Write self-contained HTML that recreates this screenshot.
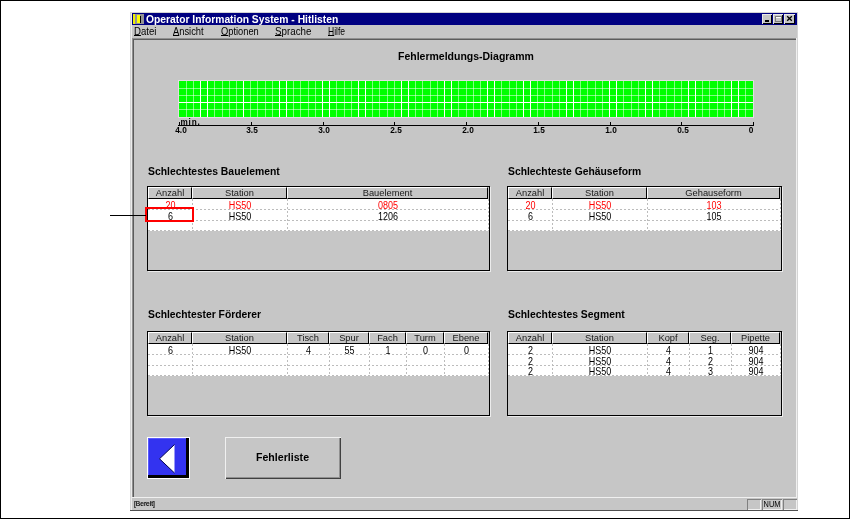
<!DOCTYPE html>
<html><head><meta charset="utf-8"><style>
html,body{margin:0;padding:0;}
body{width:850px;height:519px;position:relative;overflow:hidden;background:#fff;font-family:"Liberation Sans",sans-serif;}
u{text-decoration:underline;text-underline-offset:0px;text-decoration-thickness:1px;}
</style></head><body>
<div style="position:absolute;left:0;top:0;width:850px;height:519px;will-change:transform;">
<div style="position:absolute;left:0;top:0;width:850px;height:519px;box-sizing:border-box;border:1px solid #000;"></div>
<div style="position:absolute;left:130px;top:12px;width:668px;height:499px;background:#c6c6c6;"></div><div style="position:absolute;left:130px;top:12px;width:1px;height:499px;background:#d4d4d4;"></div><div style="position:absolute;left:131px;top:13px;width:1px;height:497px;background:#ececec;"></div><div style="position:absolute;left:130px;top:12px;width:668px;height:1px;background:#d4d4d4;"></div><div style="position:absolute;left:797px;top:12px;width:1px;height:499px;background:#d4d4d4;"></div><div style="position:absolute;left:130px;top:510px;width:668px;height:1px;background:#505050;"></div><div style="position:absolute;left:132px;top:13px;width:665px;height:12px;background:#000080;"></div><div style="position:absolute;left:133px;top:14px;width:2px;height:10px;background:#f0f000;"></div><div style="position:absolute;left:135px;top:14px;width:9px;height:10px;background:#949494;"></div><div style="position:absolute;left:137px;top:15px;width:3px;height:8px;background:#ffff00;"></div><div style="position:absolute;left:140px;top:16px;width:1px;height:7px;background:#000;"></div><div style="position:absolute;left:146.00px;top:11.99px;white-space:pre;font:bold 10.7px/14px 'Liberation Sans',sans-serif;color:#fff;letter-spacing:0px;transform:scaleX(0.9635);transform-origin:left top;">Operator Information System - Hitlisten</div><div style="position:absolute;left:762px;top:14px;width:10px;height:10px;background:#c6c6c6;box-shadow:inset 1px 1px 0 #e8e8e8, inset -1px -1px 0 #000;"><div style="position:absolute;left:3px;top:6px;width:4px;height:2px;background:#000"></div></div><div style="position:absolute;left:773px;top:14px;width:10px;height:10px;background:#c6c6c6;box-shadow:inset 1px 1px 0 #e8e8e8, inset -1px -1px 0 #000;"><div style="position:absolute;left:2px;top:2px;width:7px;height:6px;border:1px solid #7c7c7c;box-sizing:border-box"></div><div style="position:absolute;left:3px;top:3px;width:5px;height:1px;background:#fff"></div></div><div style="position:absolute;left:784px;top:14px;width:11px;height:10px;background:#c6c6c6;box-shadow:inset 1px 1px 0 #e8e8e8, inset -1px -1px 0 #000;"><svg width="11" height="10" style="position:absolute;left:0;top:0"><path d="M3.2 2.2 L7.8 6.8 M7.8 2.2 L3.2 6.8" stroke="#000" stroke-width="1.3"/></svg></div><div style="position:absolute;left:134.00px;top:23.86px;white-space:pre;font:normal 10.5px/14px 'Liberation Sans',sans-serif;color:#000;letter-spacing:0px;transform:scaleX(0.915);transform-origin:left top;"><u>D</u>atei</div><div style="position:absolute;left:173.00px;top:23.86px;white-space:pre;font:normal 10.5px/14px 'Liberation Sans',sans-serif;color:#000;letter-spacing:0px;transform:scaleX(0.89);transform-origin:left top;"><u>A</u>nsicht</div><div style="position:absolute;left:220.50px;top:23.86px;white-space:pre;font:normal 10.5px/14px 'Liberation Sans',sans-serif;color:#000;letter-spacing:0px;transform:scaleX(0.885);transform-origin:left top;"><u>O</u>ptionen</div><div style="position:absolute;left:275.00px;top:23.86px;white-space:pre;font:normal 10.5px/14px 'Liberation Sans',sans-serif;color:#000;letter-spacing:0px;transform:scaleX(0.93);transform-origin:left top;"><u>S</u>prache</div><div style="position:absolute;left:328.00px;top:23.86px;white-space:pre;font:normal 10.5px/14px 'Liberation Sans',sans-serif;color:#000;letter-spacing:0px;transform:scaleX(0.81);transform-origin:left top;"><u>H</u>ilfe</div><div style="position:absolute;left:132px;top:38px;width:2px;height:459px;background:#909090;"></div><div style="position:absolute;left:132px;top:38px;width:665px;height:2px;background:#909090;"></div><div style="position:absolute;left:133px;top:39px;width:1px;height:458px;background:#5c5c5c;"></div><div style="position:absolute;left:133px;top:39px;width:664px;height:1px;background:#5c5c5c;"></div><div style="position:absolute;left:132px;top:497px;width:665px;height:1px;background:#f0f0f0;"></div><div style="position:absolute;left:796px;top:38px;width:1px;height:460px;background:#f0f0f0;"></div><div style="position:absolute;left:134.00px;top:499.00px;white-space:pre;font:normal 7.5px/10px 'Liberation Sans',sans-serif;color:#000;letter-spacing:0px;transform:scaleX(0.88);transform-origin:left top;-webkit-text-stroke:0.2px #000;">[Bereit]</div><div style="position:absolute;left:747px;top:499px;width:14px;height:11px;box-shadow:inset 1px 1px 0 #808080, inset -1px -1px 0 #f0f0f0;box-sizing:border-box;"></div><div style="position:absolute;left:762px;top:499px;width:20px;height:11px;box-shadow:inset 1px 1px 0 #808080, inset -1px -1px 0 #f0f0f0;box-sizing:border-box;"></div><div style="position:absolute;left:783px;top:499px;width:14px;height:11px;box-shadow:inset 1px 1px 0 #808080, inset -1px -1px 0 #f0f0f0;box-sizing:border-box;"></div><div style="position:absolute;left:756.50px;top:499.42px;width:30px;text-align:center;white-space:pre;font:normal 8.6px/11px 'Liberation Sans',sans-serif;color:#000;letter-spacing:0px;transform:scaleX(0.86);transform-origin:center top;">NUM</div><div style="position:absolute;left:397.60px;top:48.79px;white-space:pre;font:bold 11px/14px 'Liberation Sans',sans-serif;color:#000;letter-spacing:0px;transform:scaleX(0.954);transform-origin:left top;">Fehlermeldungs-Diagramm</div><svg width="850" height="519" style="position:absolute;left:0;top:0"><rect x="178" y="80" width="576" height="38" fill="#e2dde2"/><rect x="179" y="81" width="574" height="36" fill="#00ff00"/><rect x="186" y="81" width="1" height="36" fill="#fff" fill-opacity="0.5"/><rect x="193" y="81" width="1" height="36" fill="#fff" fill-opacity="0.5"/><rect x="200" y="81" width="1" height="36" fill="#fff" fill-opacity="1.0"/><rect x="207" y="81" width="1" height="36" fill="#fff" fill-opacity="1.0"/><rect x="214" y="81" width="1" height="36" fill="#fff" fill-opacity="0.5"/><rect x="222" y="81" width="1" height="36" fill="#fff" fill-opacity="0.5"/><rect x="229" y="81" width="1" height="36" fill="#fff" fill-opacity="0.5"/><rect x="236" y="81" width="1" height="36" fill="#fff" fill-opacity="0.5"/><rect x="243" y="81" width="1" height="36" fill="#fff" fill-opacity="1.0"/><rect x="250" y="81" width="1" height="36" fill="#fff" fill-opacity="0.5"/><rect x="257" y="81" width="1" height="36" fill="#fff" fill-opacity="0.5"/><rect x="265" y="81" width="1" height="36" fill="#fff" fill-opacity="0.5"/><rect x="272" y="81" width="1" height="36" fill="#fff" fill-opacity="0.5"/><rect x="279" y="81" width="1" height="36" fill="#fff" fill-opacity="1.0"/><rect x="286" y="81" width="1" height="36" fill="#fff" fill-opacity="1.0"/><rect x="293" y="81" width="1" height="36" fill="#fff" fill-opacity="0.5"/><rect x="300" y="81" width="1" height="36" fill="#fff" fill-opacity="0.5"/><rect x="308" y="81" width="1" height="36" fill="#fff" fill-opacity="0.5"/><rect x="315" y="81" width="1" height="36" fill="#fff" fill-opacity="0.5"/><rect x="322" y="81" width="1" height="36" fill="#fff" fill-opacity="1.0"/><rect x="329" y="81" width="1" height="36" fill="#fff" fill-opacity="1.0"/><rect x="336" y="81" width="1" height="36" fill="#fff" fill-opacity="0.5"/><rect x="344" y="81" width="1" height="36" fill="#fff" fill-opacity="0.5"/><rect x="351" y="81" width="1" height="36" fill="#fff" fill-opacity="0.5"/><rect x="358" y="81" width="1" height="36" fill="#fff" fill-opacity="1.0"/><rect x="365" y="81" width="1" height="36" fill="#fff" fill-opacity="1.0"/><rect x="372" y="81" width="1" height="36" fill="#fff" fill-opacity="0.5"/><rect x="379" y="81" width="1" height="36" fill="#fff" fill-opacity="0.5"/><rect x="387" y="81" width="1" height="36" fill="#fff" fill-opacity="0.5"/><rect x="394" y="81" width="1" height="36" fill="#fff" fill-opacity="0.5"/><rect x="401" y="81" width="1" height="36" fill="#fff" fill-opacity="1.0"/><rect x="408" y="81" width="1" height="36" fill="#fff" fill-opacity="1.0"/><rect x="415" y="81" width="1" height="36" fill="#fff" fill-opacity="0.5"/><rect x="422" y="81" width="1" height="36" fill="#fff" fill-opacity="0.5"/><rect x="430" y="81" width="1" height="36" fill="#fff" fill-opacity="0.5"/><rect x="437" y="81" width="1" height="36" fill="#fff" fill-opacity="0.5"/><rect x="444" y="81" width="1" height="36" fill="#fff" fill-opacity="1.0"/><rect x="451" y="81" width="1" height="36" fill="#fff" fill-opacity="1.0"/><rect x="458" y="81" width="1" height="36" fill="#fff" fill-opacity="0.5"/><rect x="466" y="81" width="1" height="36" fill="#fff" fill-opacity="0.5"/><rect x="473" y="81" width="1" height="36" fill="#fff" fill-opacity="0.5"/><rect x="480" y="81" width="1" height="36" fill="#fff" fill-opacity="0.5"/><rect x="487" y="81" width="1" height="36" fill="#fff" fill-opacity="1.0"/><rect x="494" y="81" width="1" height="36" fill="#fff" fill-opacity="1.0"/><rect x="501" y="81" width="1" height="36" fill="#fff" fill-opacity="0.5"/><rect x="509" y="81" width="1" height="36" fill="#fff" fill-opacity="0.5"/><rect x="516" y="81" width="1" height="36" fill="#fff" fill-opacity="0.5"/><rect x="523" y="81" width="1" height="36" fill="#fff" fill-opacity="1.0"/><rect x="530" y="81" width="1" height="36" fill="#fff" fill-opacity="1.0"/><rect x="537" y="81" width="1" height="36" fill="#fff" fill-opacity="0.5"/><rect x="544" y="81" width="1" height="36" fill="#fff" fill-opacity="0.5"/><rect x="552" y="81" width="1" height="36" fill="#fff" fill-opacity="0.5"/><rect x="559" y="81" width="1" height="36" fill="#fff" fill-opacity="0.5"/><rect x="566" y="81" width="1" height="36" fill="#fff" fill-opacity="1.0"/><rect x="573" y="81" width="1" height="36" fill="#fff" fill-opacity="1.0"/><rect x="580" y="81" width="1" height="36" fill="#fff" fill-opacity="0.5"/><rect x="587" y="81" width="1" height="36" fill="#fff" fill-opacity="0.5"/><rect x="595" y="81" width="1" height="36" fill="#fff" fill-opacity="0.5"/><rect x="602" y="81" width="1" height="36" fill="#fff" fill-opacity="0.5"/><rect x="609" y="81" width="1" height="36" fill="#fff" fill-opacity="1.0"/><rect x="616" y="81" width="1" height="36" fill="#fff" fill-opacity="1.0"/><rect x="623" y="81" width="1" height="36" fill="#fff" fill-opacity="0.5"/><rect x="631" y="81" width="1" height="36" fill="#fff" fill-opacity="0.5"/><rect x="638" y="81" width="1" height="36" fill="#fff" fill-opacity="0.5"/><rect x="645" y="81" width="1" height="36" fill="#fff" fill-opacity="1.0"/><rect x="652" y="81" width="1" height="36" fill="#fff" fill-opacity="1.0"/><rect x="659" y="81" width="1" height="36" fill="#fff" fill-opacity="0.5"/><rect x="666" y="81" width="1" height="36" fill="#fff" fill-opacity="0.5"/><rect x="674" y="81" width="1" height="36" fill="#fff" fill-opacity="0.5"/><rect x="681" y="81" width="1" height="36" fill="#fff" fill-opacity="0.5"/><rect x="688" y="81" width="1" height="36" fill="#fff" fill-opacity="1.0"/><rect x="695" y="81" width="1" height="36" fill="#fff" fill-opacity="1.0"/><rect x="702" y="81" width="1" height="36" fill="#fff" fill-opacity="0.5"/><rect x="709" y="81" width="1" height="36" fill="#fff" fill-opacity="0.5"/><rect x="717" y="81" width="1" height="36" fill="#fff" fill-opacity="0.5"/><rect x="724" y="81" width="1" height="36" fill="#fff" fill-opacity="0.5"/><rect x="731" y="81" width="1" height="36" fill="#fff" fill-opacity="1.0"/><rect x="738" y="81" width="1" height="36" fill="#fff" fill-opacity="1.0"/><rect x="745" y="81" width="1" height="36" fill="#fff" fill-opacity="0.5"/><rect x="179" y="88" width="574" height="1" fill="#fff" fill-opacity="0.5"/><rect x="179" y="95" width="574" height="1" fill="#fff" fill-opacity="0.5"/><rect x="179" y="102" width="574" height="1" fill="#fff" fill-opacity="1.0"/><rect x="179" y="109" width="574" height="1" fill="#fff" fill-opacity="0.5"/><rect x="178" y="125" width="576" height="1" fill="#000"/><rect x="753" y="122" width="1" height="3" fill="#000"/><rect x="681" y="122" width="1" height="3" fill="#000"/><rect x="610" y="122" width="1" height="3" fill="#000"/><rect x="538" y="122" width="1" height="3" fill="#000"/><rect x="466" y="122" width="1" height="3" fill="#000"/><rect x="394" y="122" width="1" height="3" fill="#000"/><rect x="323" y="122" width="1" height="3" fill="#000"/><rect x="251" y="122" width="1" height="3" fill="#000"/><rect x="179" y="122" width="1" height="3" fill="#000"/></svg><div style="position:absolute;left:165.70px;top:124.21px;width:30px;text-align:center;white-space:pre;font:bold 9.2px/12px 'Liberation Sans',sans-serif;color:#000;letter-spacing:0px;transform:scaleX(0.9);transform-origin:center top;">4.0</div><div style="position:absolute;left:237.40px;top:124.21px;width:30px;text-align:center;white-space:pre;font:bold 9.2px/12px 'Liberation Sans',sans-serif;color:#000;letter-spacing:0px;transform:scaleX(0.9);transform-origin:center top;">3.5</div><div style="position:absolute;left:309.10px;top:124.21px;width:30px;text-align:center;white-space:pre;font:bold 9.2px/12px 'Liberation Sans',sans-serif;color:#000;letter-spacing:0px;transform:scaleX(0.9);transform-origin:center top;">3.0</div><div style="position:absolute;left:380.80px;top:124.21px;width:30px;text-align:center;white-space:pre;font:bold 9.2px/12px 'Liberation Sans',sans-serif;color:#000;letter-spacing:0px;transform:scaleX(0.9);transform-origin:center top;">2.5</div><div style="position:absolute;left:452.50px;top:124.21px;width:30px;text-align:center;white-space:pre;font:bold 9.2px/12px 'Liberation Sans',sans-serif;color:#000;letter-spacing:0px;transform:scaleX(0.9);transform-origin:center top;">2.0</div><div style="position:absolute;left:524.20px;top:124.21px;width:30px;text-align:center;white-space:pre;font:bold 9.2px/12px 'Liberation Sans',sans-serif;color:#000;letter-spacing:0px;transform:scaleX(0.9);transform-origin:center top;">1.5</div><div style="position:absolute;left:595.90px;top:124.21px;width:30px;text-align:center;white-space:pre;font:bold 9.2px/12px 'Liberation Sans',sans-serif;color:#000;letter-spacing:0px;transform:scaleX(0.9);transform-origin:center top;">1.0</div><div style="position:absolute;left:667.60px;top:124.21px;width:30px;text-align:center;white-space:pre;font:bold 9.2px/12px 'Liberation Sans',sans-serif;color:#000;letter-spacing:0px;transform:scaleX(0.9);transform-origin:center top;">0.5</div><div style="position:absolute;left:736.00px;top:124.21px;width:30px;text-align:center;white-space:pre;font:bold 9.2px/12px 'Liberation Sans',sans-serif;color:#000;letter-spacing:0px;transform:scaleX(0.9);transform-origin:center top;">0</div><div style="position:absolute;left:180.50px;top:117.46px;white-space:pre;font:normal 8.2px/11px 'Liberation Sans',sans-serif;color:#000;letter-spacing:0.8px;font-weight:600;">min.</div><div style="position:absolute;left:147.90px;top:164.19px;white-space:pre;font:bold 11px/14px 'Liberation Sans',sans-serif;color:#000;letter-spacing:0px;transform:scaleX(0.9455484611521632);transform-origin:left top;">Schlechtestes Bauelement</div><div style="position:absolute;left:507.90px;top:164.19px;white-space:pre;font:bold 11px/14px 'Liberation Sans',sans-serif;color:#000;letter-spacing:0px;transform:scaleX(0.9397913141567964);transform-origin:left top;">Schlechteste Gehäuseform</div><div style="position:absolute;left:147.90px;top:306.99px;white-space:pre;font:bold 11px/14px 'Liberation Sans',sans-serif;color:#000;letter-spacing:0px;transform:scaleX(0.9390567917635336);transform-origin:left top;">Schlechtester Förderer</div><div style="position:absolute;left:507.90px;top:306.99px;white-space:pre;font:bold 11px/14px 'Liberation Sans',sans-serif;color:#000;letter-spacing:0px;transform:scaleX(0.945748987854251);transform-origin:left top;">Schlechtestes Segment</div><div style="position:absolute;left:147px;top:186px;width:343px;height:85px;box-sizing:border-box;border:1px solid #000;box-shadow:1px 1px 0 #ececec;"></div><div style="position:absolute;left:148px;top:199px;width:341px;height:31px;background:#fff;"></div><div style="position:absolute;left:148px;top:187px;width:44px;height:12px;box-sizing:border-box;background:#c6c6c6;border-top:1px solid #fff;border-left:1px solid #fff;border-right:1px solid #000;border-bottom:1px solid #000;"></div><div style="position:absolute;left:192px;top:187px;width:95px;height:12px;box-sizing:border-box;background:#c6c6c6;border-top:1px solid #fff;border-left:1px solid #fff;border-right:1px solid #000;border-bottom:1px solid #000;"></div><div style="position:absolute;left:287px;top:187px;width:201px;height:12px;box-sizing:border-box;background:#c6c6c6;border-top:1px solid #fff;border-left:1px solid #fff;border-right:1px solid #000;border-bottom:1px solid #000;"></div><div style="position:absolute;left:148px;top:209px;width:341px;height:1px;background:repeating-linear-gradient(90deg,#bcbcbc 0 2px,#fff 2px 4px);"></div><div style="position:absolute;left:148px;top:220px;width:341px;height:1px;background:repeating-linear-gradient(90deg,#bcbcbc 0 2px,#fff 2px 4px);"></div><div style="position:absolute;left:148px;top:230px;width:341px;height:1px;background:repeating-linear-gradient(90deg,#bcbcbc 0 2px,#fff 2px 4px);"></div><div style="position:absolute;left:192px;top:199px;width:1px;height:31px;background:repeating-linear-gradient(180deg,#bcbcbc 0 2px,#fff 2px 4px);"></div><div style="position:absolute;left:287px;top:199px;width:1px;height:31px;background:repeating-linear-gradient(180deg,#bcbcbc 0 2px,#fff 2px 4px);"></div><div style="position:absolute;left:488px;top:199px;width:1px;height:31px;background:repeating-linear-gradient(180deg,#bcbcbc 0 2px,#fff 2px 4px);"></div><div style="position:absolute;left:138.50px;top:186.68px;width:63px;text-align:center;white-space:pre;font:normal 9.3px/12px 'Liberation Sans',sans-serif;color:#181818;letter-spacing:0px;">Anzahl</div><div style="position:absolute;left:182.50px;top:186.68px;width:114px;text-align:center;white-space:pre;font:normal 9.3px/12px 'Liberation Sans',sans-serif;color:#181818;letter-spacing:0px;">Station</div><div style="position:absolute;left:277.50px;top:186.68px;width:220px;text-align:center;white-space:pre;font:normal 9.3px/12px 'Liberation Sans',sans-serif;color:#181818;letter-spacing:0px;">Bauelement</div><div style="position:absolute;left:138.50px;top:198.63px;width:63px;text-align:center;white-space:pre;font:normal 10px/13px 'Liberation Sans',sans-serif;color:#ff0000;letter-spacing:0px;transform:scaleX(0.9);transform-origin:center top;">20</div><div style="position:absolute;left:182.50px;top:198.63px;width:114px;text-align:center;white-space:pre;font:normal 10px/13px 'Liberation Sans',sans-serif;color:#ff0000;letter-spacing:0px;transform:scaleX(0.9);transform-origin:center top;">HS50</div><div style="position:absolute;left:277.50px;top:198.63px;width:220px;text-align:center;white-space:pre;font:normal 10px/13px 'Liberation Sans',sans-serif;color:#ff0000;letter-spacing:0px;transform:scaleX(0.9);transform-origin:center top;">0805</div><div style="position:absolute;left:138.50px;top:209.70px;width:63px;text-align:center;white-space:pre;font:normal 10.1px/13px 'Liberation Sans',sans-serif;color:#000;letter-spacing:0px;transform:scaleX(0.89);transform-origin:center top;">6</div><div style="position:absolute;left:182.50px;top:209.70px;width:114px;text-align:center;white-space:pre;font:normal 10.1px/13px 'Liberation Sans',sans-serif;color:#000;letter-spacing:0px;transform:scaleX(0.89);transform-origin:center top;">HS50</div><div style="position:absolute;left:277.50px;top:209.70px;width:220px;text-align:center;white-space:pre;font:normal 10.1px/13px 'Liberation Sans',sans-serif;color:#000;letter-spacing:0px;transform:scaleX(0.89);transform-origin:center top;">1206</div><div style="position:absolute;left:507px;top:186px;width:275px;height:85px;box-sizing:border-box;border:1px solid #000;box-shadow:1px 1px 0 #ececec;"></div><div style="position:absolute;left:508px;top:199px;width:273px;height:31px;background:#fff;"></div><div style="position:absolute;left:508px;top:187px;width:44px;height:12px;box-sizing:border-box;background:#c6c6c6;border-top:1px solid #fff;border-left:1px solid #fff;border-right:1px solid #000;border-bottom:1px solid #000;"></div><div style="position:absolute;left:552px;top:187px;width:95px;height:12px;box-sizing:border-box;background:#c6c6c6;border-top:1px solid #fff;border-left:1px solid #fff;border-right:1px solid #000;border-bottom:1px solid #000;"></div><div style="position:absolute;left:647px;top:187px;width:133px;height:12px;box-sizing:border-box;background:#c6c6c6;border-top:1px solid #fff;border-left:1px solid #fff;border-right:1px solid #000;border-bottom:1px solid #000;"></div><div style="position:absolute;left:508px;top:209px;width:273px;height:1px;background:repeating-linear-gradient(90deg,#bcbcbc 0 2px,#fff 2px 4px);"></div><div style="position:absolute;left:508px;top:220px;width:273px;height:1px;background:repeating-linear-gradient(90deg,#bcbcbc 0 2px,#fff 2px 4px);"></div><div style="position:absolute;left:508px;top:230px;width:273px;height:1px;background:repeating-linear-gradient(90deg,#bcbcbc 0 2px,#fff 2px 4px);"></div><div style="position:absolute;left:552px;top:199px;width:1px;height:31px;background:repeating-linear-gradient(180deg,#bcbcbc 0 2px,#fff 2px 4px);"></div><div style="position:absolute;left:647px;top:199px;width:1px;height:31px;background:repeating-linear-gradient(180deg,#bcbcbc 0 2px,#fff 2px 4px);"></div><div style="position:absolute;left:780px;top:199px;width:1px;height:31px;background:repeating-linear-gradient(180deg,#bcbcbc 0 2px,#fff 2px 4px);"></div><div style="position:absolute;left:498.50px;top:186.68px;width:63px;text-align:center;white-space:pre;font:normal 9.3px/12px 'Liberation Sans',sans-serif;color:#181818;letter-spacing:0px;">Anzahl</div><div style="position:absolute;left:542.50px;top:186.68px;width:114px;text-align:center;white-space:pre;font:normal 9.3px/12px 'Liberation Sans',sans-serif;color:#181818;letter-spacing:0px;">Station</div><div style="position:absolute;left:637.50px;top:186.68px;width:152px;text-align:center;white-space:pre;font:normal 9.3px/12px 'Liberation Sans',sans-serif;color:#181818;letter-spacing:0px;">Gehauseform</div><div style="position:absolute;left:498.50px;top:198.63px;width:63px;text-align:center;white-space:pre;font:normal 10px/13px 'Liberation Sans',sans-serif;color:#ff0000;letter-spacing:0px;transform:scaleX(0.9);transform-origin:center top;">20</div><div style="position:absolute;left:542.50px;top:198.63px;width:114px;text-align:center;white-space:pre;font:normal 10px/13px 'Liberation Sans',sans-serif;color:#ff0000;letter-spacing:0px;transform:scaleX(0.9);transform-origin:center top;">HS50</div><div style="position:absolute;left:637.50px;top:198.63px;width:152px;text-align:center;white-space:pre;font:normal 10px/13px 'Liberation Sans',sans-serif;color:#ff0000;letter-spacing:0px;transform:scaleX(0.9);transform-origin:center top;">103</div><div style="position:absolute;left:498.50px;top:209.70px;width:63px;text-align:center;white-space:pre;font:normal 10.1px/13px 'Liberation Sans',sans-serif;color:#000;letter-spacing:0px;transform:scaleX(0.89);transform-origin:center top;">6</div><div style="position:absolute;left:542.50px;top:209.70px;width:114px;text-align:center;white-space:pre;font:normal 10.1px/13px 'Liberation Sans',sans-serif;color:#000;letter-spacing:0px;transform:scaleX(0.89);transform-origin:center top;">HS50</div><div style="position:absolute;left:637.50px;top:209.70px;width:152px;text-align:center;white-space:pre;font:normal 10.1px/13px 'Liberation Sans',sans-serif;color:#000;letter-spacing:0px;transform:scaleX(0.89);transform-origin:center top;">105</div><div style="position:absolute;left:147px;top:331px;width:343px;height:85px;box-sizing:border-box;border:1px solid #000;box-shadow:1px 1px 0 #ececec;"></div><div style="position:absolute;left:148px;top:344px;width:341px;height:31px;background:#fff;"></div><div style="position:absolute;left:148px;top:332px;width:44px;height:12px;box-sizing:border-box;background:#c6c6c6;border-top:1px solid #fff;border-left:1px solid #fff;border-right:1px solid #000;border-bottom:1px solid #000;"></div><div style="position:absolute;left:192px;top:332px;width:95px;height:12px;box-sizing:border-box;background:#c6c6c6;border-top:1px solid #fff;border-left:1px solid #fff;border-right:1px solid #000;border-bottom:1px solid #000;"></div><div style="position:absolute;left:287px;top:332px;width:42px;height:12px;box-sizing:border-box;background:#c6c6c6;border-top:1px solid #fff;border-left:1px solid #fff;border-right:1px solid #000;border-bottom:1px solid #000;"></div><div style="position:absolute;left:329px;top:332px;width:40px;height:12px;box-sizing:border-box;background:#c6c6c6;border-top:1px solid #fff;border-left:1px solid #fff;border-right:1px solid #000;border-bottom:1px solid #000;"></div><div style="position:absolute;left:369px;top:332px;width:37px;height:12px;box-sizing:border-box;background:#c6c6c6;border-top:1px solid #fff;border-left:1px solid #fff;border-right:1px solid #000;border-bottom:1px solid #000;"></div><div style="position:absolute;left:406px;top:332px;width:38px;height:12px;box-sizing:border-box;background:#c6c6c6;border-top:1px solid #fff;border-left:1px solid #fff;border-right:1px solid #000;border-bottom:1px solid #000;"></div><div style="position:absolute;left:444px;top:332px;width:44px;height:12px;box-sizing:border-box;background:#c6c6c6;border-top:1px solid #fff;border-left:1px solid #fff;border-right:1px solid #000;border-bottom:1px solid #000;"></div><div style="position:absolute;left:148px;top:354px;width:341px;height:1px;background:repeating-linear-gradient(90deg,#bcbcbc 0 2px,#fff 2px 4px);"></div><div style="position:absolute;left:148px;top:365px;width:341px;height:1px;background:repeating-linear-gradient(90deg,#bcbcbc 0 2px,#fff 2px 4px);"></div><div style="position:absolute;left:148px;top:375px;width:341px;height:1px;background:repeating-linear-gradient(90deg,#bcbcbc 0 2px,#fff 2px 4px);"></div><div style="position:absolute;left:192px;top:344px;width:1px;height:31px;background:repeating-linear-gradient(180deg,#bcbcbc 0 2px,#fff 2px 4px);"></div><div style="position:absolute;left:287px;top:344px;width:1px;height:31px;background:repeating-linear-gradient(180deg,#bcbcbc 0 2px,#fff 2px 4px);"></div><div style="position:absolute;left:329px;top:344px;width:1px;height:31px;background:repeating-linear-gradient(180deg,#bcbcbc 0 2px,#fff 2px 4px);"></div><div style="position:absolute;left:369px;top:344px;width:1px;height:31px;background:repeating-linear-gradient(180deg,#bcbcbc 0 2px,#fff 2px 4px);"></div><div style="position:absolute;left:406px;top:344px;width:1px;height:31px;background:repeating-linear-gradient(180deg,#bcbcbc 0 2px,#fff 2px 4px);"></div><div style="position:absolute;left:444px;top:344px;width:1px;height:31px;background:repeating-linear-gradient(180deg,#bcbcbc 0 2px,#fff 2px 4px);"></div><div style="position:absolute;left:488px;top:344px;width:1px;height:31px;background:repeating-linear-gradient(180deg,#bcbcbc 0 2px,#fff 2px 4px);"></div><div style="position:absolute;left:138.50px;top:331.68px;width:63px;text-align:center;white-space:pre;font:normal 9.3px/12px 'Liberation Sans',sans-serif;color:#181818;letter-spacing:0px;">Anzahl</div><div style="position:absolute;left:182.50px;top:331.68px;width:114px;text-align:center;white-space:pre;font:normal 9.3px/12px 'Liberation Sans',sans-serif;color:#181818;letter-spacing:0px;">Station</div><div style="position:absolute;left:277.50px;top:331.68px;width:61px;text-align:center;white-space:pre;font:normal 9.3px/12px 'Liberation Sans',sans-serif;color:#181818;letter-spacing:0px;">Tisch</div><div style="position:absolute;left:319.50px;top:331.68px;width:59px;text-align:center;white-space:pre;font:normal 9.3px/12px 'Liberation Sans',sans-serif;color:#181818;letter-spacing:0px;">Spur</div><div style="position:absolute;left:359.50px;top:331.68px;width:56px;text-align:center;white-space:pre;font:normal 9.3px/12px 'Liberation Sans',sans-serif;color:#181818;letter-spacing:0px;">Fach</div><div style="position:absolute;left:396.50px;top:331.68px;width:57px;text-align:center;white-space:pre;font:normal 9.3px/12px 'Liberation Sans',sans-serif;color:#181818;letter-spacing:0px;">Turm</div><div style="position:absolute;left:434.50px;top:331.68px;width:63px;text-align:center;white-space:pre;font:normal 9.3px/12px 'Liberation Sans',sans-serif;color:#181818;letter-spacing:0px;">Ebene</div><div style="position:absolute;left:138.50px;top:344.20px;width:63px;text-align:center;white-space:pre;font:normal 10.1px/13px 'Liberation Sans',sans-serif;color:#000;letter-spacing:0px;transform:scaleX(0.89);transform-origin:center top;">6</div><div style="position:absolute;left:182.50px;top:344.20px;width:114px;text-align:center;white-space:pre;font:normal 10.1px/13px 'Liberation Sans',sans-serif;color:#000;letter-spacing:0px;transform:scaleX(0.89);transform-origin:center top;">HS50</div><div style="position:absolute;left:277.50px;top:344.20px;width:61px;text-align:center;white-space:pre;font:normal 10.1px/13px 'Liberation Sans',sans-serif;color:#000;letter-spacing:0px;transform:scaleX(0.89);transform-origin:center top;">4</div><div style="position:absolute;left:319.50px;top:344.20px;width:59px;text-align:center;white-space:pre;font:normal 10.1px/13px 'Liberation Sans',sans-serif;color:#000;letter-spacing:0px;transform:scaleX(0.89);transform-origin:center top;">55</div><div style="position:absolute;left:359.50px;top:344.20px;width:56px;text-align:center;white-space:pre;font:normal 10.1px/13px 'Liberation Sans',sans-serif;color:#000;letter-spacing:0px;transform:scaleX(0.89);transform-origin:center top;">1</div><div style="position:absolute;left:396.50px;top:344.20px;width:57px;text-align:center;white-space:pre;font:normal 10.1px/13px 'Liberation Sans',sans-serif;color:#000;letter-spacing:0px;transform:scaleX(0.89);transform-origin:center top;">0</div><div style="position:absolute;left:434.50px;top:344.20px;width:63px;text-align:center;white-space:pre;font:normal 10.1px/13px 'Liberation Sans',sans-serif;color:#000;letter-spacing:0px;transform:scaleX(0.89);transform-origin:center top;">0</div><div style="position:absolute;left:507px;top:331px;width:275px;height:85px;box-sizing:border-box;border:1px solid #000;box-shadow:1px 1px 0 #ececec;"></div><div style="position:absolute;left:508px;top:344px;width:273px;height:31px;background:#fff;"></div><div style="position:absolute;left:508px;top:332px;width:44px;height:12px;box-sizing:border-box;background:#c6c6c6;border-top:1px solid #fff;border-left:1px solid #fff;border-right:1px solid #000;border-bottom:1px solid #000;"></div><div style="position:absolute;left:552px;top:332px;width:95px;height:12px;box-sizing:border-box;background:#c6c6c6;border-top:1px solid #fff;border-left:1px solid #fff;border-right:1px solid #000;border-bottom:1px solid #000;"></div><div style="position:absolute;left:647px;top:332px;width:42px;height:12px;box-sizing:border-box;background:#c6c6c6;border-top:1px solid #fff;border-left:1px solid #fff;border-right:1px solid #000;border-bottom:1px solid #000;"></div><div style="position:absolute;left:689px;top:332px;width:42px;height:12px;box-sizing:border-box;background:#c6c6c6;border-top:1px solid #fff;border-left:1px solid #fff;border-right:1px solid #000;border-bottom:1px solid #000;"></div><div style="position:absolute;left:731px;top:332px;width:49px;height:12px;box-sizing:border-box;background:#c6c6c6;border-top:1px solid #fff;border-left:1px solid #fff;border-right:1px solid #000;border-bottom:1px solid #000;"></div><div style="position:absolute;left:508px;top:354px;width:273px;height:1px;background:repeating-linear-gradient(90deg,#bcbcbc 0 2px,#fff 2px 4px);"></div><div style="position:absolute;left:508px;top:365px;width:273px;height:1px;background:repeating-linear-gradient(90deg,#bcbcbc 0 2px,#fff 2px 4px);"></div><div style="position:absolute;left:508px;top:375px;width:273px;height:1px;background:repeating-linear-gradient(90deg,#bcbcbc 0 2px,#fff 2px 4px);"></div><div style="position:absolute;left:552px;top:344px;width:1px;height:31px;background:repeating-linear-gradient(180deg,#bcbcbc 0 2px,#fff 2px 4px);"></div><div style="position:absolute;left:647px;top:344px;width:1px;height:31px;background:repeating-linear-gradient(180deg,#bcbcbc 0 2px,#fff 2px 4px);"></div><div style="position:absolute;left:689px;top:344px;width:1px;height:31px;background:repeating-linear-gradient(180deg,#bcbcbc 0 2px,#fff 2px 4px);"></div><div style="position:absolute;left:731px;top:344px;width:1px;height:31px;background:repeating-linear-gradient(180deg,#bcbcbc 0 2px,#fff 2px 4px);"></div><div style="position:absolute;left:780px;top:344px;width:1px;height:31px;background:repeating-linear-gradient(180deg,#bcbcbc 0 2px,#fff 2px 4px);"></div><div style="position:absolute;left:498.50px;top:331.68px;width:63px;text-align:center;white-space:pre;font:normal 9.3px/12px 'Liberation Sans',sans-serif;color:#181818;letter-spacing:0px;">Anzahl</div><div style="position:absolute;left:542.50px;top:331.68px;width:114px;text-align:center;white-space:pre;font:normal 9.3px/12px 'Liberation Sans',sans-serif;color:#181818;letter-spacing:0px;">Station</div><div style="position:absolute;left:637.50px;top:331.68px;width:61px;text-align:center;white-space:pre;font:normal 9.3px/12px 'Liberation Sans',sans-serif;color:#181818;letter-spacing:0px;">Kopf</div><div style="position:absolute;left:679.50px;top:331.68px;width:61px;text-align:center;white-space:pre;font:normal 9.3px/12px 'Liberation Sans',sans-serif;color:#181818;letter-spacing:0px;">Seg.</div><div style="position:absolute;left:721.50px;top:331.68px;width:68px;text-align:center;white-space:pre;font:normal 9.3px/12px 'Liberation Sans',sans-serif;color:#181818;letter-spacing:0px;">Pipette</div><div style="position:absolute;left:498.50px;top:344.20px;width:63px;text-align:center;white-space:pre;font:normal 10.1px/13px 'Liberation Sans',sans-serif;color:#000;letter-spacing:0px;transform:scaleX(0.89);transform-origin:center top;">2</div><div style="position:absolute;left:542.50px;top:344.20px;width:114px;text-align:center;white-space:pre;font:normal 10.1px/13px 'Liberation Sans',sans-serif;color:#000;letter-spacing:0px;transform:scaleX(0.89);transform-origin:center top;">HS50</div><div style="position:absolute;left:637.50px;top:344.20px;width:61px;text-align:center;white-space:pre;font:normal 10.1px/13px 'Liberation Sans',sans-serif;color:#000;letter-spacing:0px;transform:scaleX(0.89);transform-origin:center top;">4</div><div style="position:absolute;left:679.50px;top:344.20px;width:61px;text-align:center;white-space:pre;font:normal 10.1px/13px 'Liberation Sans',sans-serif;color:#000;letter-spacing:0px;transform:scaleX(0.89);transform-origin:center top;">1</div><div style="position:absolute;left:721.50px;top:344.20px;width:68px;text-align:center;white-space:pre;font:normal 10.1px/13px 'Liberation Sans',sans-serif;color:#000;letter-spacing:0px;transform:scaleX(0.89);transform-origin:center top;">904</div><div style="position:absolute;left:498.50px;top:354.70px;width:63px;text-align:center;white-space:pre;font:normal 10.1px/13px 'Liberation Sans',sans-serif;color:#000;letter-spacing:0px;transform:scaleX(0.89);transform-origin:center top;">2</div><div style="position:absolute;left:542.50px;top:354.70px;width:114px;text-align:center;white-space:pre;font:normal 10.1px/13px 'Liberation Sans',sans-serif;color:#000;letter-spacing:0px;transform:scaleX(0.89);transform-origin:center top;">HS50</div><div style="position:absolute;left:637.50px;top:354.70px;width:61px;text-align:center;white-space:pre;font:normal 10.1px/13px 'Liberation Sans',sans-serif;color:#000;letter-spacing:0px;transform:scaleX(0.89);transform-origin:center top;">4</div><div style="position:absolute;left:679.50px;top:354.70px;width:61px;text-align:center;white-space:pre;font:normal 10.1px/13px 'Liberation Sans',sans-serif;color:#000;letter-spacing:0px;transform:scaleX(0.89);transform-origin:center top;">2</div><div style="position:absolute;left:721.50px;top:354.70px;width:68px;text-align:center;white-space:pre;font:normal 10.1px/13px 'Liberation Sans',sans-serif;color:#000;letter-spacing:0px;transform:scaleX(0.89);transform-origin:center top;">904</div><div style="position:absolute;left:498.50px;top:365.20px;width:63px;text-align:center;white-space:pre;font:normal 10.1px/13px 'Liberation Sans',sans-serif;color:#000;letter-spacing:0px;transform:scaleX(0.89);transform-origin:center top;">2</div><div style="position:absolute;left:542.50px;top:365.20px;width:114px;text-align:center;white-space:pre;font:normal 10.1px/13px 'Liberation Sans',sans-serif;color:#000;letter-spacing:0px;transform:scaleX(0.89);transform-origin:center top;">HS50</div><div style="position:absolute;left:637.50px;top:365.20px;width:61px;text-align:center;white-space:pre;font:normal 10.1px/13px 'Liberation Sans',sans-serif;color:#000;letter-spacing:0px;transform:scaleX(0.89);transform-origin:center top;">4</div><div style="position:absolute;left:679.50px;top:365.20px;width:61px;text-align:center;white-space:pre;font:normal 10.1px/13px 'Liberation Sans',sans-serif;color:#000;letter-spacing:0px;transform:scaleX(0.89);transform-origin:center top;">3</div><div style="position:absolute;left:721.50px;top:365.20px;width:68px;text-align:center;white-space:pre;font:normal 10.1px/13px 'Liberation Sans',sans-serif;color:#000;letter-spacing:0px;transform:scaleX(0.89);transform-origin:center top;">904</div><div style="position:absolute;left:145px;top:207px;width:49px;height:15px;box-sizing:border-box;border:2px solid #ff0000;"></div><div style="position:absolute;left:110px;top:215px;width:36px;height:1px;background:#000;"></div><div style="position:absolute;left:147px;top:437px;width:43px;height:42px;background:#fff;"></div><div style="position:absolute;left:148px;top:438px;width:41px;height:40px;background:#000;"></div><div style="position:absolute;left:148px;top:438px;width:38px;height:37px;background:#3333f0;"></div><div style="position:absolute;left:148px;top:438px;width:38px;height:1px;background:#5a5aff;"></div><div style="position:absolute;left:148px;top:438px;width:1px;height:37px;background:#5a5aff;"></div><svg width="850" height="519" style="position:absolute;left:0;top:0"><path d="M174.5 444.5 L159.5 458.8 L174.5 473 Z" fill="#fff"/><path d="M174.5 444.5 L159.5 458.8 L174.5 473" fill="none" stroke="#000050" stroke-width="1"/></svg><div style="position:absolute;left:225px;top:437px;width:116px;height:42px;background:#c6c6c6;box-sizing:border-box;box-shadow:inset 1px 1px 0 #f0f0f0, inset -1px -1px 0 #404040, inset -2px -2px 0 #909090;"></div><div style="position:absolute;left:256.10px;top:450.09px;white-space:pre;font:bold 11px/14px 'Liberation Sans',sans-serif;color:#000;letter-spacing:0px;transform:scaleX(0.964);transform-origin:left top;">Fehlerliste</div>
</div>
</body></html>
